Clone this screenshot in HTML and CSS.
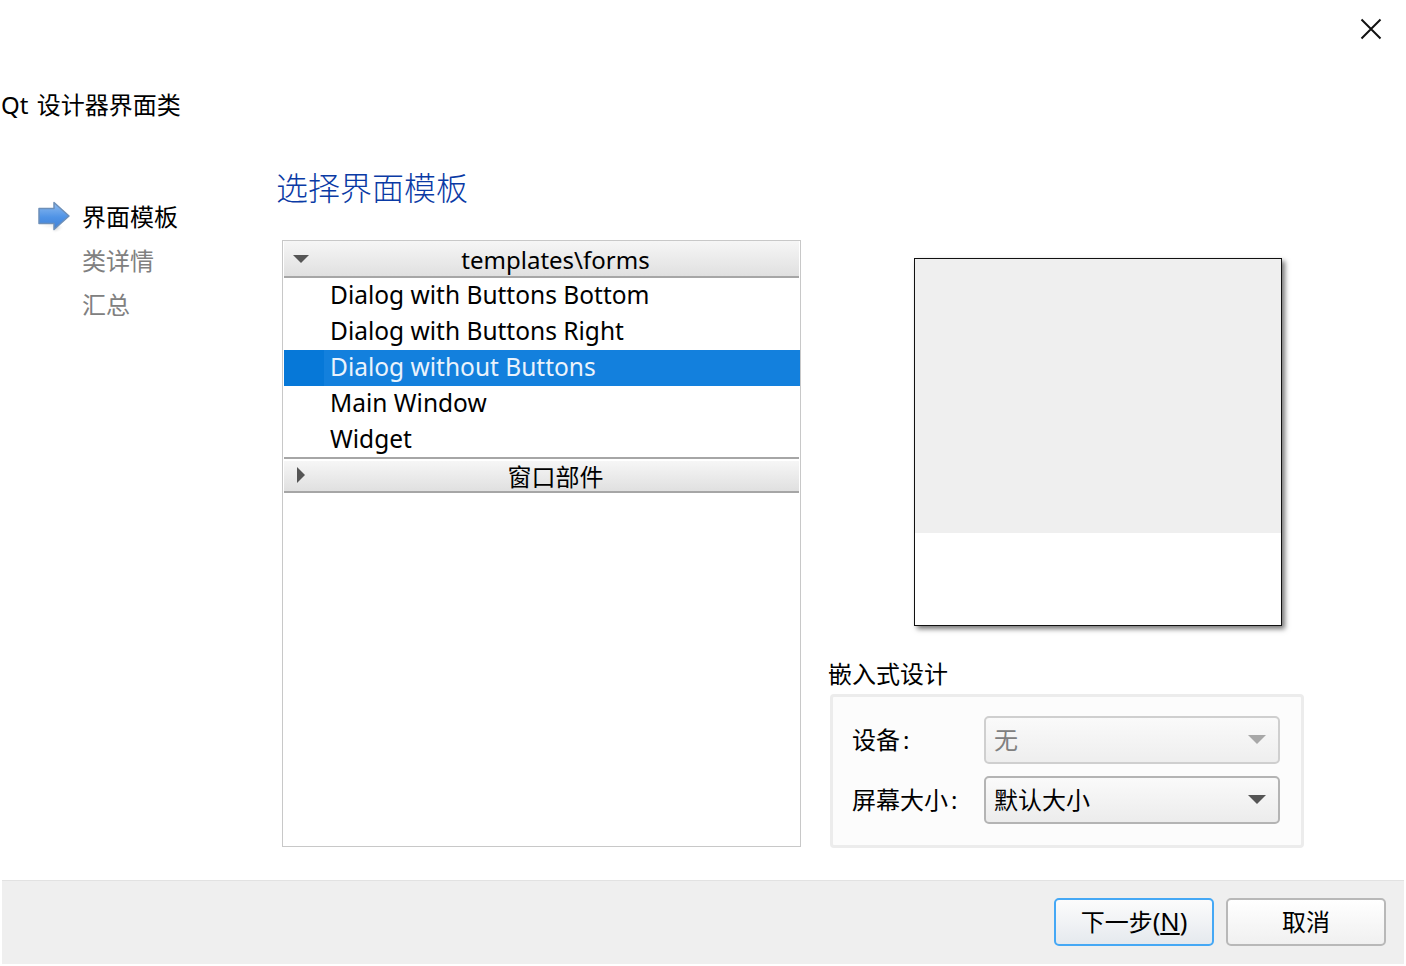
FILE: index.html
```html
<!DOCTYPE html>
<html lang="zh">
<head>
<meta charset="utf-8">
<title>Qt 设计器界面类</title>
<link rel="stylesheet" href="styles.css">
</head>
<body>
<div class="dialog">
  <header class="head">
    <div class="close-row">
      <svg class="close" width="24" height="24" viewBox="0 0 24 24"><path d="M2.5 2.5 21.5 21.5M21.5 2.5 2.5 21.5" fill="none" stroke="#111" stroke-width="2"/></svg>
    </div>
    <h1 class="dialog-title">Qt 设计器界面类</h1>
  </header>
  <main class="main">
    <nav class="steps">
      <div class="step current">
        <svg class="step-arrow" width="36" height="36" viewBox="0 0 36 36">
          <defs>
            <linearGradient id="arrowFill" x1="0" y1="0" x2="0" y2="1">
              <stop offset="0" stop-color="#8fbcf0"/>
              <stop offset=".55" stop-color="#4f93e6"/>
              <stop offset="1" stop-color="#3f7fd4"/>
            </linearGradient>
            <filter id="arrowBlur" x="-20%" y="-50%" width="140%" height="200%"><feGaussianBlur stdDeviation="1.500"/></filter>
          </defs>
          <path d="M4 25H18V31L26 27Z" fill="#000" opacity=".18" filter="url(#arrowBlur)"/>
          <path d="M3 8.500H18V2.500L33 16 18 29.500V23.500H3Z" fill="url(#arrowFill)" stroke="#6d8fb8" stroke-width="1.500" stroke-linejoin="round"/>
        </svg>
        <span>界面模板</span>
      </div>
      <div class="step">类详情</div>
      <div class="step">汇总</div>
    </nav>
    <section class="page">
      <h2 class="page-title">选择界面模板</h2>
      <div class="page-body">
        <div class="tree">
          <div class="tree-head">
            <svg class="caret" width="16" height="10" viewBox="0 0 16 10"><path d="M0 1H16L8 9Z" fill="#555"/></svg>
            <span>templates\forms</span>
          </div>
          <div class="tree-item">Dialog with Buttons Bottom</div>
          <div class="tree-item">Dialog with Buttons Right</div>
          <div class="tree-item selected">Dialog without Buttons</div>
          <div class="tree-item">Main Window</div>
          <div class="tree-item">Widget</div>
          <div class="tree-head second">
            <svg class="caret side" width="10" height="18" viewBox="0 0 10 18"><path d="M1 1V17L9 9Z" fill="#555"/></svg>
            <span>窗口部件</span>
          </div>
        </div>
        <div class="side-col">
          <div class="preview"><div class="preview-fill"></div></div>
          <div class="group-label">嵌入式设计</div>
          <div class="group">
            <div class="form-row">
              <span class="form-label">设备<span class="colon">:</span></span>
              <div class="combo disabled"><span class="combo-text">无</span><i class="tri"></i></div>
            </div>
            <div class="form-row">
              <span class="form-label">屏幕大小<span class="colon">:</span></span>
              <div class="combo"><span class="combo-text">默认大小</span><i class="tri"></i></div>
            </div>
          </div>
        </div>
      </div>
    </section>
  </main>
  <footer class="foot">
    <button class="btn primary" type="button"><span class="btn-text">下一步<span class="latin">(<u>N</u>)</span></span></button>
    <button class="btn" type="button"><span class="btn-text">取消</span></button>
  </footer>
</div>
</body>
</html>
```
FILE: styles.css
```css
* { box-sizing: border-box; }
html, body { margin: 0; padding: 0; background: #fff; }
body {
  font-family: "Noto Sans", "Noto Sans CJK SC", sans-serif;
  color: #000;
  font-size: 24px;
}
.dialog {
  width: 1406px;
  height: 966px;
  display: flex;
  flex-direction: column;
  overflow: hidden;
}
.head { height: 160px; flex: none; }
.close-row {
  height: 88px;
  padding: 17px 23px 0 0;
  display: flex;
  justify-content: flex-end;
}
.close { display: block; }
.dialog-title {
  margin: 0;
  padding-left: 1px;
  font-size: 24px;
  font-weight: 400;
  line-height: 34px;
  word-spacing: 2px;
}
.main { flex: 1; display: flex; min-height: 0; }
.steps {
  width: 277px;
  flex: none;
  padding-top: 35px;
}
.step {
  height: 44px;
  line-height: 44px;
  padding-left: 82px;
  color: #808080;
  position: relative;
}
.step.current { color: #000; }
.step-arrow { position: absolute; left: 36px; top: 5px; }
.page { flex: 1; min-width: 0; }
.page-title {
  margin: 0 0 0 -1px;
  height: 56px;
  font-size: 32px;
  font-weight: 300;
  line-height: 55px;
  color: #0a3aa5;
}
.page-body {
  margin-top: 24px;
  padding-left: 5px;
  display: flex;
  align-items: flex-start;
}
.tree {
  width: 519px;
  height: 607px;
  border: 1px solid #c8c8c8;
  padding: 0 0 0 1px;
  flex: none;
}
.tree-head {
  height: 37px;
  border-bottom: 2px solid #a6a6a6;
  background: linear-gradient(#f6f6f6, #e0e0e0);
  position: relative;
  text-align: center;
  line-height: 38px;
  padding-left: 28px;
  margin-right: 1px;
}
.tree-head.second {
  height: 36px;
  margin-top: -1px;
  border-top: 2px solid #a6a6a6;
  line-height: 35px;
  background: linear-gradient(#fff 0, #fff 2px, #f6f6f6 2px, #e0e0e0);
}
.caret { position: absolute; left: 9px; top: 13px; }
.caret.side { left: 12px; top: 7px; }
.tree-item {
  height: 36px;
  line-height: 33px;
  padding-left: 46px;
  font-size: 24.500px;
  white-space: nowrap;
}
.tree-item.selected {
  color: #eaf3fc;
  background: linear-gradient(90deg, #0678d8 0, #0678d8 40px, #1380dd 40px);
}
.side-col {
  margin-left: 27px;
  width: 476px;
  flex: none;
}
.preview {
  margin: 18px 0 0 86px;
  width: 368px;
  height: 368px;
  border: 1px solid #111;
  background: #fff;
  box-shadow: 3px 3px 5px #777;
}
.preview-fill { height: 274px; background: #efefef; }
.group-label { margin-top: 30px; height: 38px; line-height: 36px; }
.group {
  margin-left: 2px;
  width: 474px;
  height: 154px;
  border: 3px solid #ececec;
  border-radius: 4px;
  background: #fcfcfc;
  padding: 19px 21px 0 19px;
  display: flex;
  flex-direction: column;
  gap: 12px;
}
.form-row { display: flex; align-items: center; height: 48px; }
.form-label { width: 132px; flex: none; padding-bottom: 4px; }
.colon { margin-left: 3px; }
.combo {
  flex: 1;
  height: 48px;
  border: 2px solid #b4b4b4;
  border-radius: 5px;
  background: linear-gradient(#fafafa, #ececec);
  display: flex;
  align-items: center;
  justify-content: space-between;
  padding: 0 12px 0 8px;
}
.combo-text { padding-bottom: 4px; }
.combo.disabled { border-color: #cfcfcf; color: #808080; background: linear-gradient(#fafafa, #eeeeee); }
.tri {
  width: 0;
  height: 0;
  border-left: 9px solid transparent;
  border-right: 9px solid transparent;
  border-top: 9px solid #555;
  margin-bottom: 1px;
}
.combo.disabled .tri { border-top-color: #a8a8a8; }
.foot {
  margin: 0 2px 2px;
  height: 84px;
  flex: none;
  background: #efefef;
  border-top: 1px solid #e2e2e2;
  display: flex;
  justify-content: flex-end;
  gap: 12px;
  padding: 17px 18px 0 0;
}
.btn {
  width: 160px;
  height: 48px;
  border: 2px solid #b8b8b8;
  border-radius: 5px;
  background: linear-gradient(#ffffff, #f0f0f0);
  font: inherit;
  color: #000;
  padding: 0;
}
.btn-text { display: block; padding-bottom: 3px; }
.latin { font-size: 25.500px; }
.btn.primary {
  border-color: #45a8f5;
  background: linear-gradient(#fcfcfc, #e5e9ee);
}
```
